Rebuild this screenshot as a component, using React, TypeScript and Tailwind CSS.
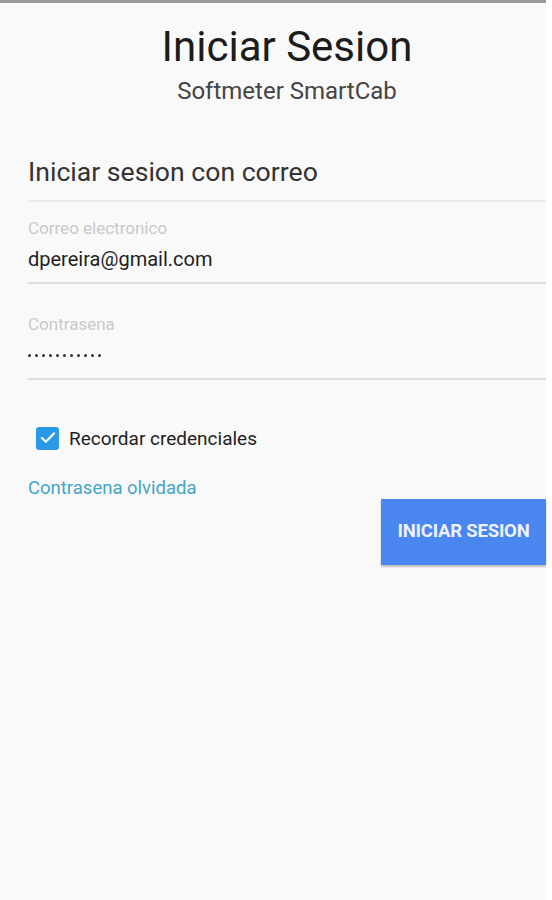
import { Check } from 'lucide-react'

export default function App() {
  return (
    <div className="flex h-[900px] w-[552px] bg-white font-['Roboto',sans-serif]">
      <div className="flex w-[546px] flex-col border-t-[3px] border-[#9c9c9c] bg-[#f9f9f9]">
        <header className="flex flex-col items-center pl-[28px] pt-[20px]">
          <h1 className="text-[42px] leading-[48px] font-normal text-[#1c1c1c]">Iniciar Sesion</h1>
          <p className="mt-[6px] text-[24px] leading-[28px] text-[#444]">Softmeter SmartCab</p>
        </header>

        <div className="mt-[51px] pl-[28px]">
          <h2 className="text-[26.6px] leading-[32px] text-[#333]">Iniciar sesion con correo</h2>
          <div className="mt-[12px] h-[2px] bg-[#ececec]" />

          <div className="pt-[16px]">
            <label className="block text-[17px] leading-[20px] text-[#c9c9c9]">Correo electronico</label>
            <div className="mt-[9px] text-[20px] leading-[24px] text-[#1f1f1f]">dpereira@gmail.com</div>
            <div className="mt-[11px] h-[2px] bg-[#dedede]" />
          </div>

          <div className="pt-[30px]">
            <label className="block text-[17px] leading-[20px] text-[#c9c9c9]">Contrasena</label>
            <div className="mt-[9px] flex h-[24px] items-center gap-[4px]">
              {Array.from({ length: 11 }).map((_, i) => (
                <span key={i} className="h-[3px] w-[3px] rounded-full bg-[#333]" />
              ))}
            </div>
            <div className="mt-[11px] h-[2px] bg-[#dedede]" />
          </div>

          <label className="mt-[45px] ml-[8px] flex items-center gap-[10px]">
            <span className="flex h-[23px] w-[23px] items-center justify-center rounded-[3px] bg-[#2a9ae8]">
              <Check className="h-[18px] w-[18px] text-white" strokeWidth={3} />
            </span>
            <span className="mt-[2px] text-[19px] leading-[24px] text-[#222]">Recordar credenciales</span>
          </label>

          <a className="mt-[26px] block text-[18.5px] leading-[22px] text-[#45a5c6]">Contrasena olvidada</a>

          <div className="flex justify-end">
            <button className="h-[66px] w-[165px] bg-[#4a86f0] text-[18.5px] font-bold tracking-[-0.2px] text-[#eef2fc] shadow-[0_2px_2px_rgba(0,0,0,0.25)]">
              INICIAR SESION
            </button>
          </div>
        </div>
      </div>
    </div>
  )
}
